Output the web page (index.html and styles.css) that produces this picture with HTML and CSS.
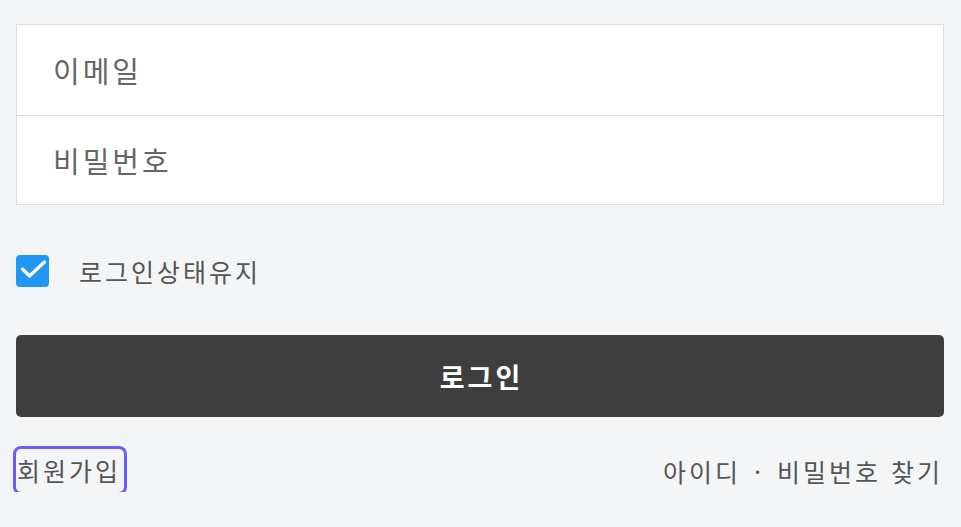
FILE: index.html
```html
<!DOCTYPE html>
<html lang="ko">
<head>
<meta charset="UTF-8">
<meta name="viewport" content="width=device-width, initial-scale=1.0">
<title>로그인</title>
<link rel="stylesheet" href="styles.css">
</head>
<body>

<div class="container">
    <div class="login-box">
        <input type="email" class="login-input" placeholder="이메일">
        <input type="password" class="login-input" placeholder="비밀번호">
    </div>

    <label class="keep-login">
        <span class="check-box">
            <svg width="33" height="33" viewBox="0 0 33 33"><path d="M7 20l7 7 15-14" fill="none" stroke="#fff" stroke-width="3.2" stroke-linecap="round" stroke-linejoin="round" transform="translate(-0.5 -6)"/></svg>
        </span>
        <span class="keep-text">로그인상태유지</span>
    </label>

    <button class="login-btn">로그인</button>

    <div class="login-links">
        <a href="#" class="join-link">회원가입</a>
        <a href="#" class="find-link">아이디 <span class="dot">·</span> 비밀번호 찾기</a>
    </div>
</div>

</body>
</html>
```

FILE: styles.css
```css
body {
    margin: 0;
    padding: 0;
    background-color: #f4f5f7;
    font-family: "Noto Sans CJK KR", "Noto Sans", sans-serif;
}

.container {
    padding: 24px 17px 0 16px;
}

.login-box {
    background-color: #fff;
    border: 1px solid #dddddd;
}

.login-input {
    display: block;
    width: 100%;
    height: 90px;
    padding: 0 36px;
    border: none;
    box-sizing: border-box;
    font-family: inherit;
    font-size: 29px;
    letter-spacing: 3px;
    color: #333;
    background: transparent;
    outline: none;
}

.login-input + .login-input {
    height: 89px;
    border-top: 1px solid #dddddd;
}

.login-input::placeholder {
    color: #666;
}

.keep-login {
    display: flex;
    align-items: center;
    gap: 30px;
    margin-top: 50px;
    height: 32px;
}

.check-box {
    display: block;
    width: 33px;
    height: 32px;
    background-color: #2196f3;
    border-radius: 4px;
}

.check-box svg {
    display: block;
}

.keep-text {
    font-size: 25px;
    letter-spacing: 3px;
    color: #555;
}

.login-btn {
    display: block;
    width: 100%;
    height: 82px;
    margin-top: 48px;
    border: none;
    border-radius: 5px;
    background-color: #3e3e3e;
    color: #fff;
    font-family: inherit;
    font-size: 27px;
    font-weight: bold;
    letter-spacing: 3px;
    text-indent: 3px;
    cursor: pointer;
}

.login-links {
    display: flex;
    justify-content: space-between;
    align-items: center;
    margin-top: 32px;
}

.login-links a {
    color: #555;
    font-size: 25px;
    letter-spacing: 3px;
    text-decoration: none;
}

.join-link {
    display: inline-block;
    height: 43px;
    line-height: 43px;
    padding: 0 3px 0 1px;
    outline: 3px solid #6b5cff;
    border-radius: 5px;
}

.find-link .dot {
    margin: 0 3px;
}

.find-link {
    margin-right: 1px;
}
```
